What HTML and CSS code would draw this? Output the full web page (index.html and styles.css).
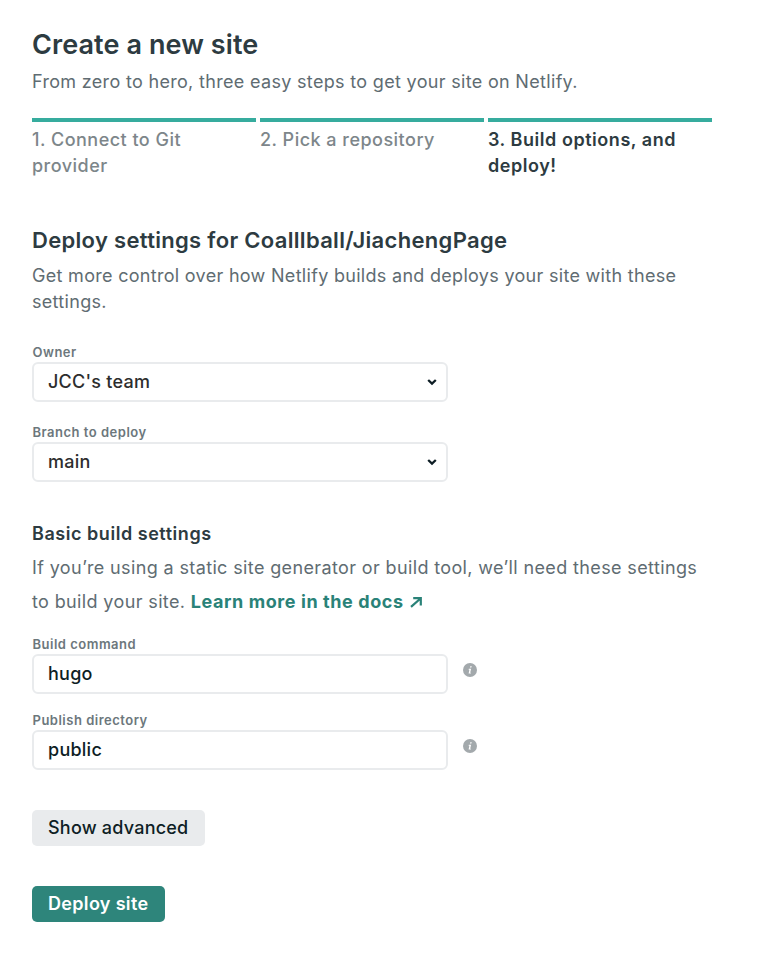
FILE: index.html
```html
<!DOCTYPE html>
<html lang="en">
<head>
<meta charset="utf-8">
<title>Create a new site</title>
<link rel="stylesheet" href="styles.css">
</head>
<body>
<main class="page">
  <header>
    <h1>Create a new site</h1>
    <p class="lead">From zero to hero, three easy steps to get your site on Netlify.</p>
  </header>
  <ol class="steps">
    <li>1. Connect to Git provider</li>
    <li>2. Pick a repository</li>
    <li class="active">3. Build options, and deploy!</li>
  </ol>
  <section class="deploy">
    <h2>Deploy settings for Coalllball/JiachengPage</h2>
    <p class="intro">Get more control over how Netlify builds and deploys your site with these settings.</p>
    <div class="field owner">
      <label>Owner</label>
      <div class="control select">JCC's team<svg class="chevron" viewBox="0 0 10 8"><path d="M1.2 2 5 5.6 8.8 2"/></svg></div>
    </div>
    <div class="field">
      <label>Branch to deploy</label>
      <div class="control select">main<svg class="chevron" viewBox="0 0 10 8"><path d="M1.2 2 5 5.6 8.8 2"/></svg></div>
    </div>
  </section>
  <section class="build">
    <h3>Basic build settings</h3>
    <p class="help">If you’re using a static site generator or build tool, we’ll need these settings<br>to build your site. <a>Learn more in the docs<svg class="arrow" viewBox="0 0 12 11"><path d="M3.2 1.2H10.8V8.6M10.5 1.5 1 9.9"/></svg></a></p>
    <div class="field command">
      <label>Build command</label>
      <div class="row"><div class="control">hugo</div><svg class="info" viewBox="0 0 14 14"><circle cx="7" cy="7" r="7"/><path d="M7.3 3.2h1.5l-.4 1.4H6.9zM5.8 5.8h2.3L7.2 9.7h.8l-.2.9H5.6l.8-3.8h-.8z"/></svg></div>
    </div>
    <div class="field">
      <label>Publish directory</label>
      <div class="row"><div class="control">public</div><svg class="info" viewBox="0 0 14 14"><circle cx="7" cy="7" r="7"/><path d="M7.3 3.2h1.5l-.4 1.4H6.9zM5.8 5.8h2.3L7.2 9.7h.8l-.2.9H5.6l.8-3.8h-.8z"/></svg></div>
    </div>
  </section>
  <button class="button secondary">Show advanced</button>
  <button class="button primary">Deploy site</button>
</main>
</body>
</html>
```
FILE: styles.css
```css
* { box-sizing: border-box; }
body { margin: 0; background: #fff; color: #2d3b41; font: 18px/26px Inter, sans-serif; }
h1, h2, h3, p, ol { margin: 0; padding: 0; }
.page { width: 712px; padding: 28px 0 0 32px; }
h1 { font-size: 27px; line-height: 34px; font-weight: 600; letter-spacing: .09px; }
.lead { margin-top: 7px; color: #606c72; letter-spacing: .32px; }
.steps { display: grid; grid-template-columns: repeat(3, 224px); gap: 4px; margin-top: 23px; list-style: none; }
.steps li { border-top: 4px solid #36ac9e; padding: 5px 20px 0 0; font-weight: 500; color: #7d868a; letter-spacing: .48px; }
.steps .active { color: #2d3b41; font-weight: 600; letter-spacing: .54px; }
.deploy { margin-top: 47px; }
h2 { font-size: 22px; line-height: 28px; font-weight: 600; letter-spacing: .31px; }
.intro { margin-top: 9px; color: #606c72; letter-spacing: .3px; }
.field { display: flex; flex-direction: column; margin-top: 21px; }
.owner { margin-top: 28px; }
label { height: 19px; padding-left: .5px; font-size: 13px; line-height: 18px; font-weight: 600; color: #6c777c; letter-spacing: .5px; }
.control { width: 416px; height: 40px; padding: 0 14px; border: 2px solid #e9ebed; border-radius: 6px; font-weight: 500; line-height: 36px; letter-spacing: .25px; color: #0e1e25; }
.select { display: flex; align-items: center; justify-content: space-between; color: #2d2d2d; padding-right: 9px; }
.chevron { width: 10px; height: 8px; fill: none; stroke: #0e1e25; stroke-width: 2.3; }
.build { margin-top: 38px; }
h3 { font-size: 18px; line-height: 28px; font-weight: 600; letter-spacing: .54px; }
.help { margin-top: 3px; line-height: 34px; color: #606c72; letter-spacing: .37px; }
.help a { color: #2a8278; font-weight: 700; letter-spacing: .58px; }
.arrow { width: 12px; height: 11px; margin-left: 6.5px; fill: none; stroke: currentColor; stroke-width: 2.2; }
.command { margin-top: 16px; }
.build .field + .field { margin-top: 17px; }
.row { display: flex; gap: 15px; }
.info { width: 14px; height: 14px; margin-top: 9px; fill: #a3a9ac; }
.info path { fill: #fff; }
.button { display: block; border: 0; border-radius: 5px; height: 36px; padding: 0 0 0 16px; font: 500 18px/36px Inter, sans-serif; text-align: left; letter-spacing: .22px; color: #0e1e25; }
.secondary { width: 173px; margin-top: 40px; background: #e9ebed; }
.primary { width: 133px; margin-top: 40px; background: #2e857b; color: #fff; font-weight: 600; letter-spacing: .33px; }
```
